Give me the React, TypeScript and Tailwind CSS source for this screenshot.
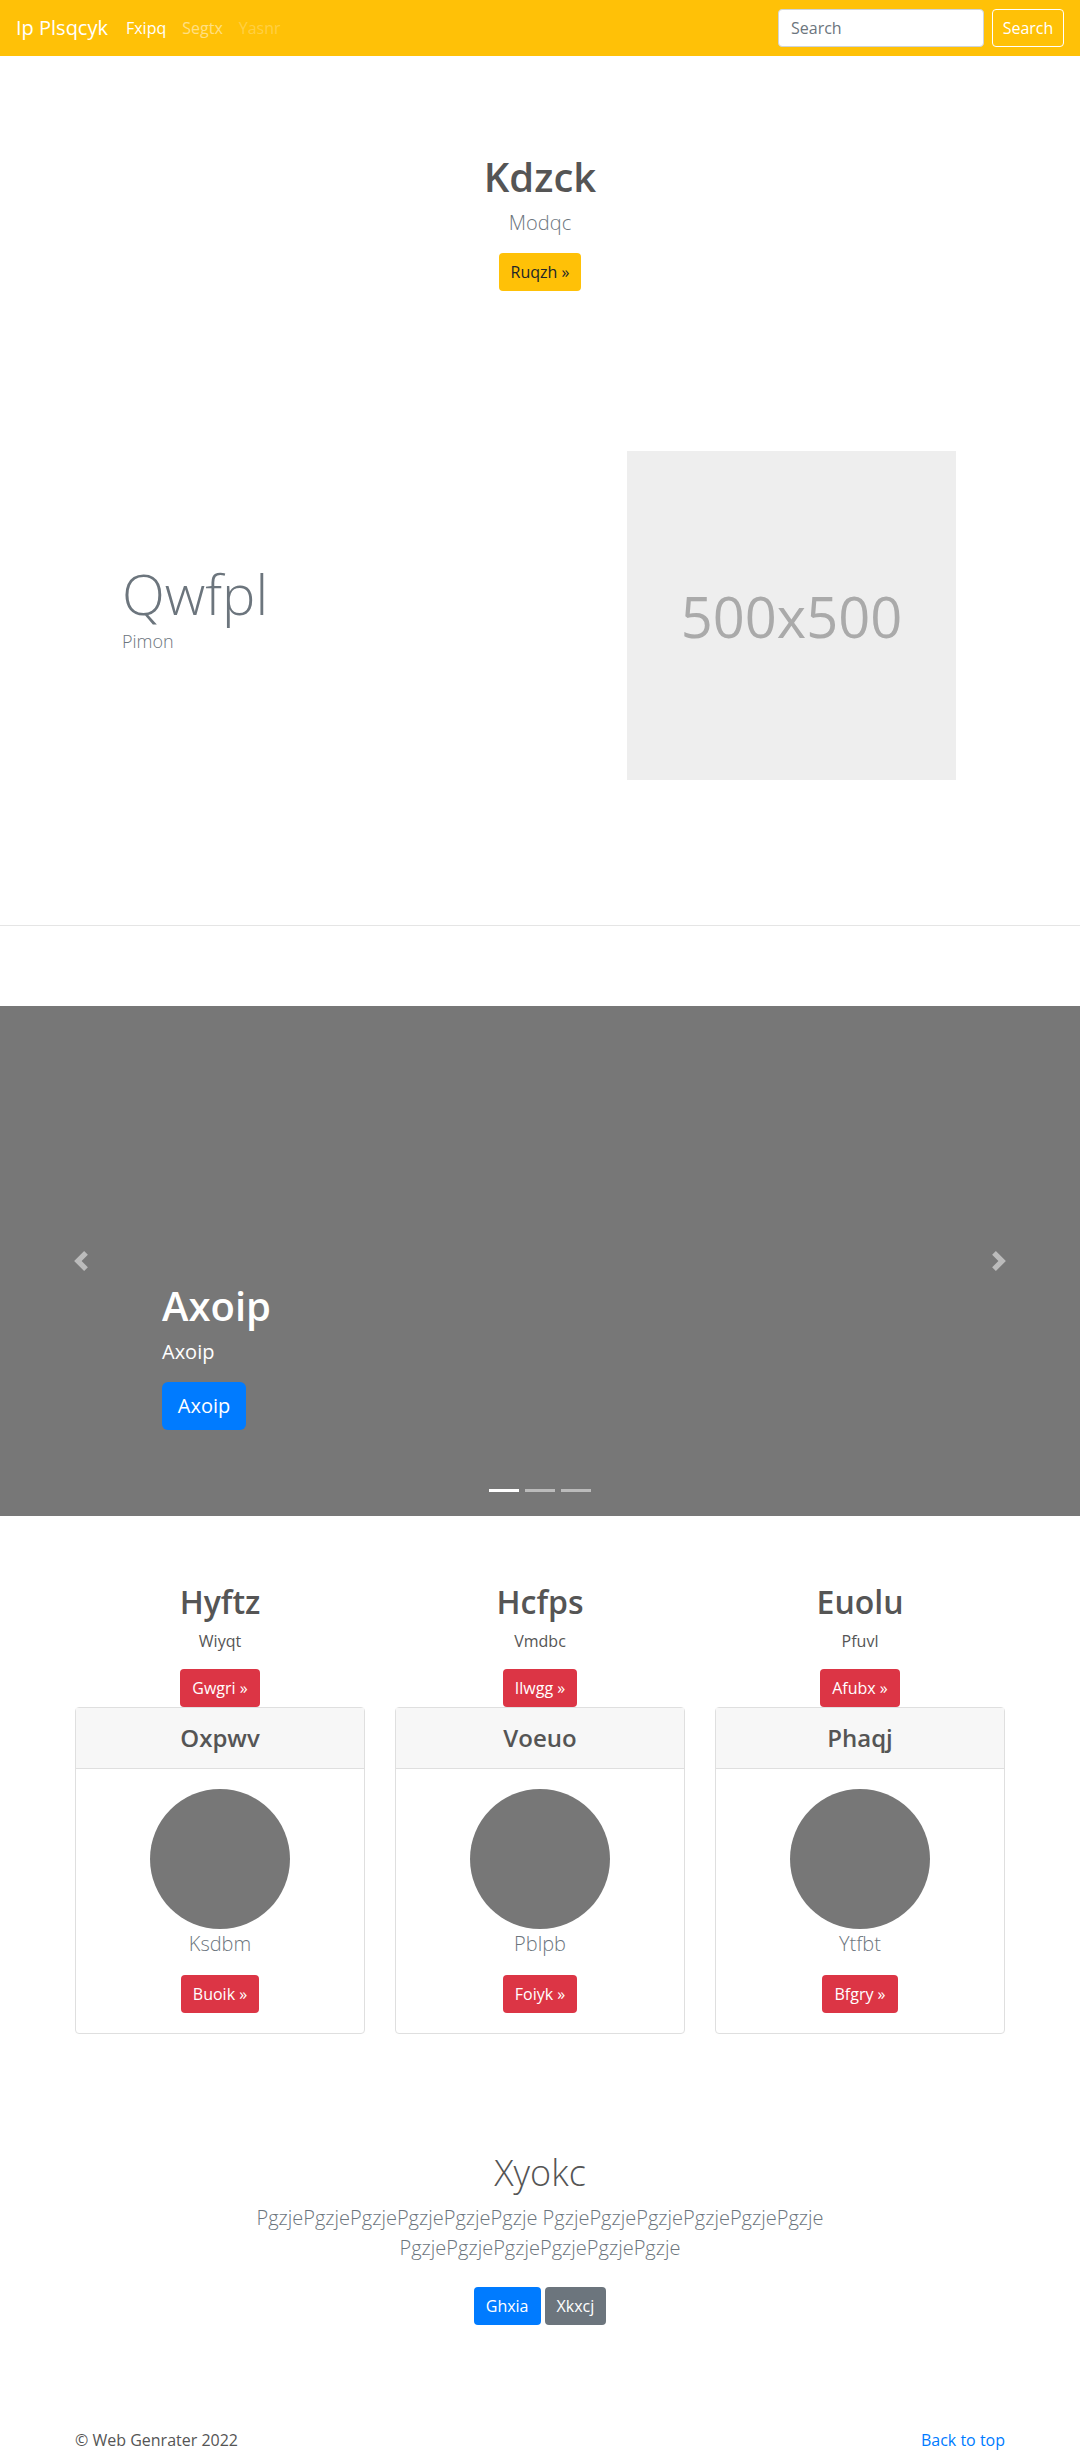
import React from 'react'

const font = "font-['Segoe_UI','Open_Sans',sans-serif]"

const columns = [
  { title: 'Hyftz', sub: 'Wiyqt', btn: 'Gwgri', card: 'Oxpwv', name: 'Ksdbm', action: 'Buoik' },
  { title: 'Hcfps', sub: 'Vmdbc', btn: 'Ilwgg', card: 'Voeuo', name: 'Pblpb', action: 'Foiyk' },
  { title: 'Euolu', sub: 'Pfuvl', btn: 'Afubx', card: 'Phaqj', name: 'Ytfbt', action: 'Bfgry' },
]

function Chevron({ dir }: { dir: 'left' | 'right' }) {
  return (
    <svg width="20" height="20" viewBox="0 0 8 8" fill="#fff" className='opacity-50'>
      {dir === 'left'
        ? <path d="M5.25 0l-4 4 4 4 1.5-1.5-2.5-2.5 2.5-2.5-1.5-1.5z" />
        : <path d="M2.75 0l-1.5 1.5 2.5 2.5-2.5 2.5 1.5 1.5 4-4-4-4z" />}
    </svg>
  )
}

export default function App() {
  return (
    <div className={`${font} bg-white text-[#212529] text-base leading-normal`}>

      {/* navbar */}
      <nav className='h-14 bg-[#ffc107] flex items-center px-4'>
        <span className='text-xl text-white mr-[10px]'>Ip Plsqcyk</span>
        <ul className='flex'>
          <li className='px-2 text-white'>Fxipq</li>
          <li className='px-2 text-white/50'>Segtx</li>
          <li className='px-2 text-white/25'>Yasnr</li>
        </ul>
        <form className='ml-auto flex items-center'>
          <input
            placeholder='Search'
            className='w-[206px] h-[38px] mr-2 px-3 bg-white rounded border border-[#ced4da] text-base placeholder:text-[#6c757d] outline-none'
          />
          <button type='button' className='w-[72px] h-[38px] rounded border border-white text-white'>Search</button>
        </form>
      </nav>

      {/* hero */}
      <section className='pt-[97px] text-center'>
        <h1 className='text-[40px] leading-[1.2] font-semibold text-[#555] mb-2'>Kdzck</h1>
        <p className='text-xl font-light text-[#6c757d] mb-4'>Modqc</p>
        <button className='h-[38px] w-[82px] rounded bg-[#ffc107] text-[#212529]'>Ruqzh »</button>
      </section>

      {/* feature */}
      <section className='w-[960px] mx-auto px-[15px] pt-[160px] pb-[145px] flex items-center'>
        <div className='w-[552px] pl-[47px]'>
          <h2 className='text-[56px] leading-[1.2] font-light text-[#6c757d]'>Qwfpl</h2>
          <p className='text-lg font-light text-[#6c757d] mb-4'>Pimon</p>
        </div>
        <div className='w-[329px] h-[329px] bg-[#eeeeee] flex items-center justify-center text-[56px] text-[#aaaaaa]'>
          500x500
        </div>
      </section>

      <hr className='border-t border-[#e5e5e5]' />

      {/* carousel */}
      <section className='mt-[80px] h-[510px] bg-[#777777] relative flex'>
        <div className='w-[15%] flex items-center justify-center'><Chevron dir='left' /></div>
        <div className='flex-1 flex flex-col justify-end pb-[86px] text-white'>
          <h1 className='text-[40px] leading-[1.2] font-semibold mb-2'>Axoip</h1>
          <p className='text-xl mb-4'>Axoip</p>
          <div>
            <button className='h-12 w-[84px] rounded-md bg-[#007bff] text-xl text-white'>Axoip</button>
          </div>
        </div>
        <div className='w-[15%] flex items-center justify-center'><Chevron dir='right' /></div>
        <div className='absolute bottom-[24px] left-0 right-0 flex justify-center gap-[6px]'>
          <span className='w-[30px] h-[3px] bg-white' />
          <span className='w-[30px] h-[3px] bg-white/50' />
          <span className='w-[30px] h-[3px] bg-white/50' />
        </div>
      </section>

      {/* columns */}
      <section className='w-[960px] mx-auto px-[15px] pt-[67px] grid grid-cols-3 gap-[30px]'>
        {columns.map((c) => (
          <div key={c.title} className='text-center'>
            <h2 className='text-[32px] leading-[1.2] font-semibold text-[#555] mb-2'>{c.title}</h2>
            <p className='text-base leading-6 text-[#555] mb-4'>{c.sub}</p>
            <button className='h-[38px] px-3 rounded bg-[#dc3545] text-white'>{c.btn} »</button>
            <div className='border border-[#dfdfdf] rounded'>
              <div className='h-[61px] bg-[#f7f7f7] border-b border-[#dfdfdf] flex items-center justify-center'>
                <h4 className='text-2xl font-semibold text-[#555]'>{c.card}</h4>
              </div>
              <div className='p-5 flex flex-col items-center'>
                <div className='w-[140px] h-[140px] rounded-full bg-[#777777]' />
                <p className='text-xl leading-[30px] font-light text-[#6c757d] mb-4'>{c.name}</p>
                <button className='h-[38px] px-3 rounded bg-[#dc3545] text-white'>{c.action} »</button>
              </div>
            </div>
          </div>
        ))}
      </section>

      {/* call to action */}
      <section className='pt-[117px] pb-[56px] text-center'>
        <h1 className='text-[36px] leading-[1.2] font-light text-[#555] mb-2'>Xyokc</h1>
        <p className='w-[610px] mx-auto text-xl leading-[30px] font-light text-[#6c757d] mb-6'>
          PgzjePgzjePgzjePgzjePgzjePgzje PgzjePgzjePgzjePgzjePgzjePgzje PgzjePgzjePgzjePgzjePgzjePgzje
        </p>
        <div className='flex justify-center gap-1'>
          <button className='h-[38px] px-3 rounded bg-[#007bff] text-white'>Ghxia</button>
          <button className='h-[38px] px-3 rounded bg-[#6c757d] text-white'>Xkxcj</button>
        </div>
      </section>

      {/* footer */}
      <footer className='w-[960px] mx-auto px-[15px] pt-[47px] pb-[48px] flex justify-between text-[#555]'>
        <p>© Web Genrater 2022</p>
        <a href='#' className='text-[#007bff]'>Back to top</a>
      </footer>
    </div>
  )
}
